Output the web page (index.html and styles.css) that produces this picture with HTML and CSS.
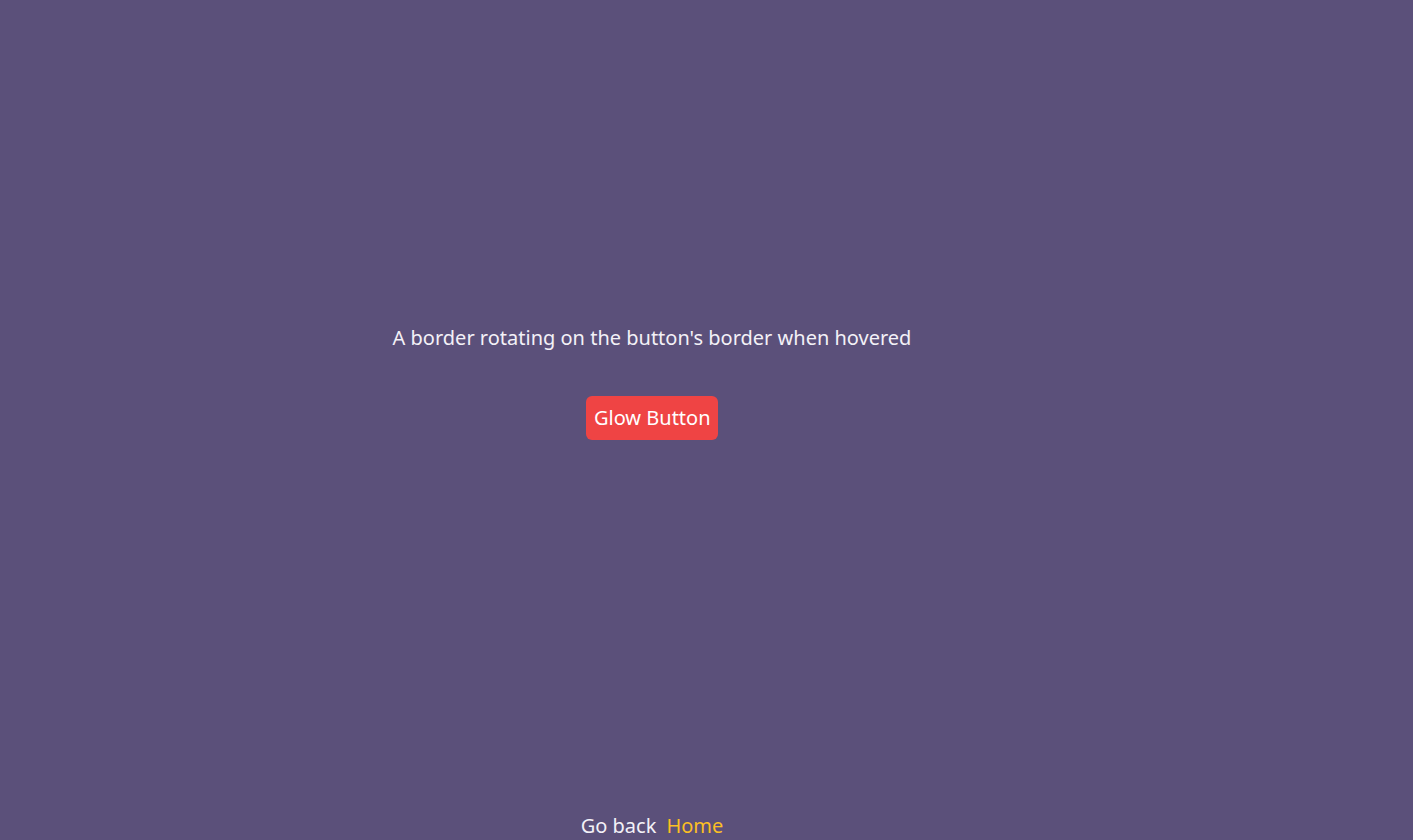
FILE: index.html
```html
<!DOCTYPE html>
<html lang="en">
<head>
<meta charset="utf-8">
<title>Glow Button</title>
<link rel="stylesheet" href="styles.css">
</head>
<body>
<div class="page">
  <main class="demo">
    <p class="caption">A border rotating on the button's border when hovered</p>
    <button class="glow-btn" type="button">Glow Button</button>
  </main>
  <footer class="footer">
    <span class="back">Go back</span>
    <a class="home" href="#">Home</a>
  </footer>
</div>
</body>
</html>
```
FILE: styles.css
```css
html, body {
  margin: 0;
  padding: 0;
  height: 100%;
}
body {
  background: #5b507a;
  color: #f3f1f7;
  font-family: "Noto Sans", "Open Sans", sans-serif;
  overflow: hidden;
}
.page {
  height: 100vh;
  display: flex;
  flex-direction: column;
  padding-right: 109px;
  box-sizing: border-box;
}
.demo {
  flex: 1;
  display: flex;
  flex-direction: column;
  align-items: center;
  justify-content: center;
  gap: 44px;
  padding-bottom: 49px;
}
.caption {
  margin: 0;
  font-size: 20px;
  line-height: 28px;
}
.glow-btn {
  font-family: inherit;
  font-size: 20px;
  line-height: 28px;
  color: #fff;
  background: #ef4444;
  border: none;
  border-radius: 6px;
  padding: 8px 7.5px 8px 8px;
  cursor: pointer;
}
.footer {
  display: flex;
  justify-content: center;
  gap: 10px;
  font-size: 20px;
  line-height: 28px;
}
.home {
  color: #fbbf24;
  text-decoration: none;
}
```
